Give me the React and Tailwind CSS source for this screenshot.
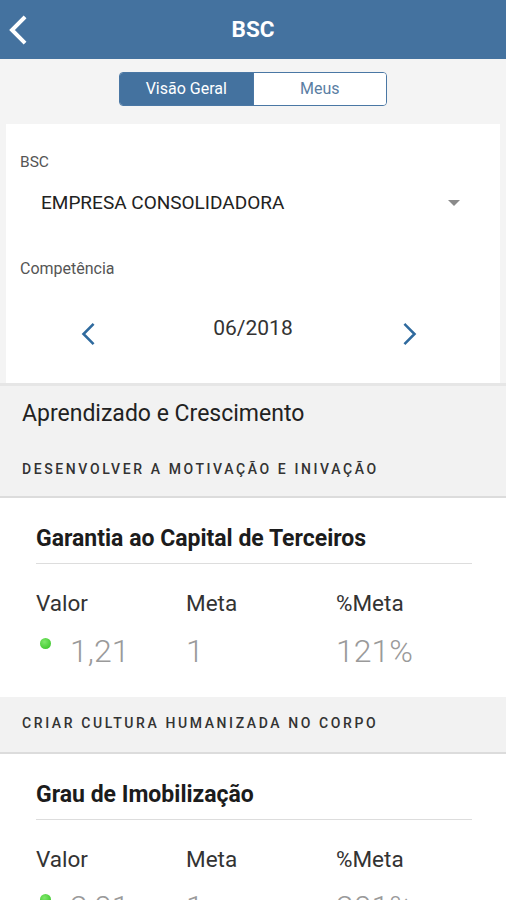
import React from "react";

function Chevron({ dir = "left", className = "", sw = "2.8" }) {
  return (
    <svg viewBox="0 0 24 24" className={className} fill="none" stroke="currentColor" strokeWidth={sw} strokeLinecap="square" strokeLinejoin="miter">
      {dir === "left" ? <path d="M16 2 L6 12 L16 22" /> : <path d="M8 2 L18 12 L8 22" />}
    </svg>
  );
}

function Metric({ title, valor, meta, pct }) {
  return (
    <div className="bg-white px-[36px] pt-[28px] pb-[26px]">
      <div className="h-[26px] leading-[26px] text-[23px] font-bold text-[#1c1c1c] whitespace-nowrap">{title}</div>
      <div className="mt-[11px] mr-[-2px] h-px bg-[#dddddd]" />
      <div className="mt-[26px] grid grid-cols-[150px_150px_1fr] h-[26px] leading-[26px] text-[22.5px] text-[#333]">
        <div>Valor</div>
        <div>Meta</div>
        <div>%Meta</div>
      </div>
      <div className="mt-[15px] grid grid-cols-[150px_150px_1fr] h-[40px] leading-[40px] text-[32px] font-light text-[#9a9a9a]">
        <div className="flex items-start">
          <span className="mt-[7px] ml-[4px] w-[11px] h-[11px] rounded-full bg-[radial-gradient(circle_at_40%_35%,#7ee86a,#2fbf1f)]" />
          <span className="ml-[19px]">{valor}</span>
        </div>
        <div>{meta}</div>
        <div>{pct}</div>
      </div>
    </div>
  );
}

export default function App() {
  return (
    <div className="w-[506px] h-[900px] overflow-hidden bg-[#f4f4f4] font-['Roboto',sans-serif]">
      <div className="h-[59px] bg-[#44729f] relative flex items-center justify-center">
        <Chevron dir="left" sw="3.4" className="absolute left-[5px] top-[15px] w-[28px] h-[30px] text-white" />
        <span className="text-white text-[22.5px] font-bold">BSC</span>
      </div>
      <div className="pt-[13px] flex justify-center">
        <div className="flex w-[268px] h-[34px] rounded-[4px] border border-[#4a77a4] overflow-hidden text-[16px]">
          <div className="flex-1 bg-[#44729f] text-white flex items-center justify-center">Visão Geral</div>
          <div className="flex-1 bg-white text-[#5a7ea3] flex items-center justify-center border-l border-[#4a77a4]">Meus</div>
        </div>
      </div>
      <div className="mt-[18px] mx-[6px] bg-white pt-[28px] pb-[35px] px-[14px]">
        <div className="h-[20px] leading-[20px] text-[15.5px] text-[#555]">BSC</div>
        <div className="mt-[19px] h-[24px] flex items-center pl-[21px] pr-[26px]">
          <span className="flex-1 text-[19px] text-[#222]">EMPRESA CONSOLIDADORA</span>
          <span className="w-0 h-0 border-l-[6px] border-r-[6px] border-t-[6px] border-l-transparent border-r-transparent border-t-[#8a8a8a]" />
        </div>
        <div className="mt-[44px] h-[20px] leading-[20px] text-[16px] text-[#555]">Competência</div>
        <div className="mt-[33px] h-[36px] grid grid-cols-[1fr_auto_1fr] items-center">
          <Chevron dir="left" className="ml-[58px] w-[22px] h-[24px] text-[#2f6a9e] mt-[8px]" />
          <span className="text-[21px] text-[#333] -mt-[3px]">06/2018</span>
          <Chevron dir="right" className="justify-self-end mr-[66px] w-[22px] h-[24px] text-[#2f6a9e] mt-[8px]" />
        </div>
      </div>
      <div className="h-[3px] bg-[#e6e6e6]" />
      <div className="bg-[#f2f2f2] border-b-2 border-[#dcdcdc]">
        <div className="pl-[22px] pt-[14px] h-[28px] leading-[28px] box-content text-[23px] text-[#222]">Aprendizado e Crescimento</div>
        <div className="pl-[22px] mt-[32px] pb-[18px] h-[18px] leading-[18px] box-content text-[14px] font-medium tracking-[2.6px] text-[#333] whitespace-nowrap">DESENVOLVER A MOTIVAÇÃO E INIVAÇÃO</div>
      </div>
      <Metric title="Garantia ao Capital de Terceiros" valor="1,21" meta="1" pct="121%" />
      <div className="bg-[#f2f2f2] border-b-2 border-[#dcdcdc] h-[57px] flex items-center pl-[22px]">
        <span className="text-[14px] font-medium tracking-[2.6px] text-[#333] -mt-[2px] whitespace-nowrap">CRIAR CULTURA HUMANIZADA NO CORPO</span>
      </div>
      <Metric title="Grau de Imobilização" valor="2,01" meta="1" pct="201%" />
    </div>
  );
}
